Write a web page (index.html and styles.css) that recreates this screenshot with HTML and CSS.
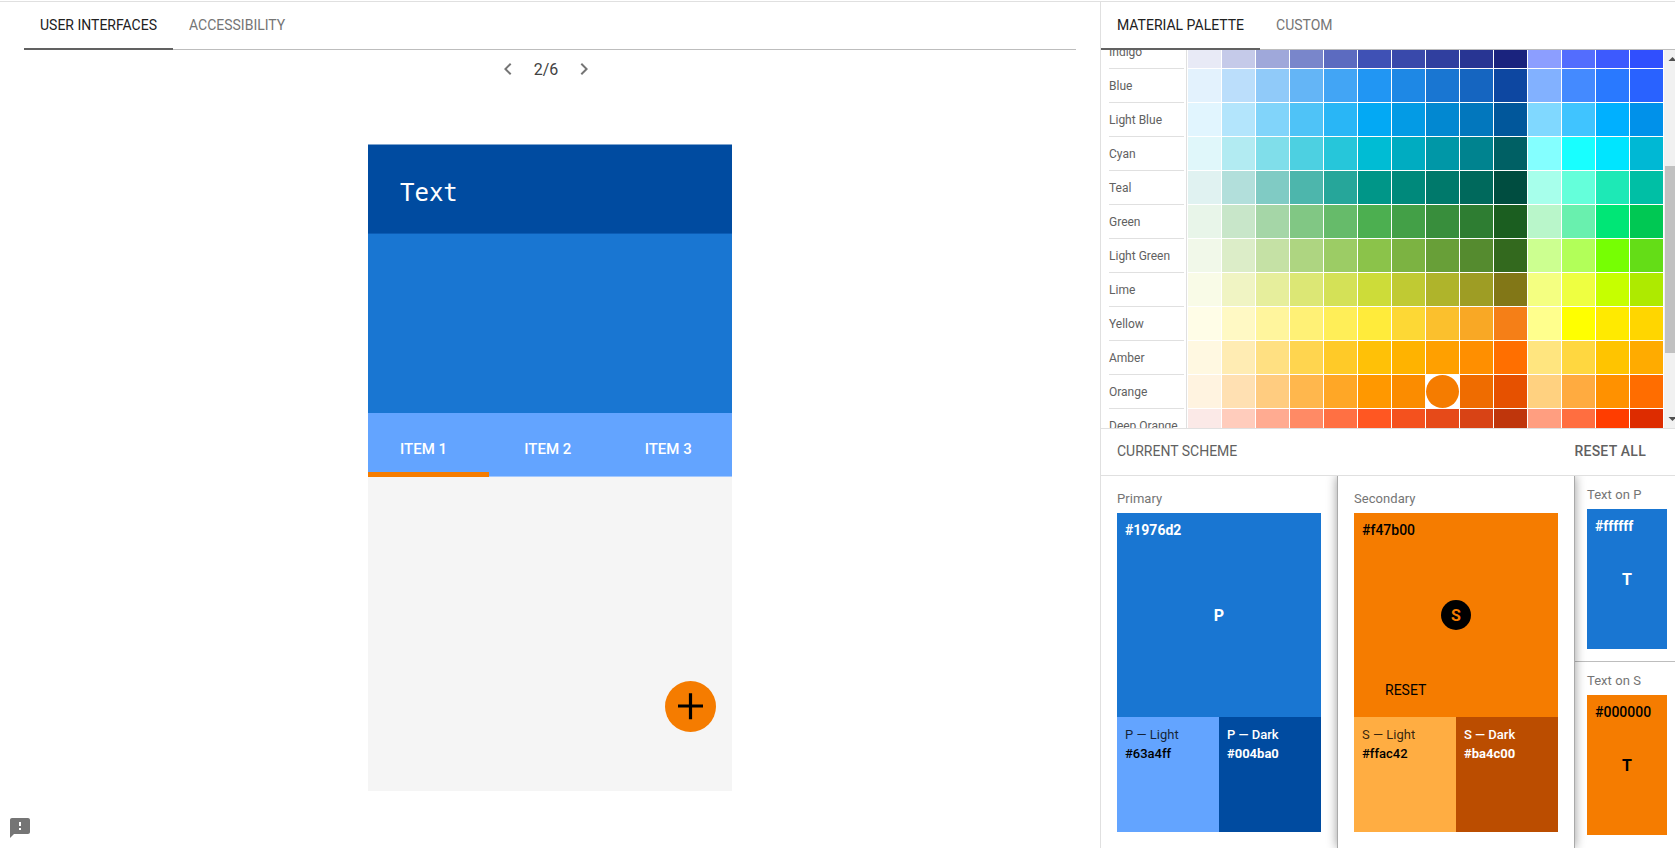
FILE: index.html
```html
<!DOCTYPE html>
<html lang="en">
<head>
<meta charset="utf-8">
<title>Color Tool</title>
<link rel="stylesheet" href="styles.css">
</head>
<body>
<div class="app">
  <main class="preview">
    <nav class="tabs tabs-left">
      <a class="tab active">USER INTERFACES</a>
      <a class="tab">ACCESSIBILITY</a>
    </nav>
    <div class="pager">
      <svg class="arrow" width="24" height="24" viewBox="0 0 24 24"><path d="M15.41 7.41L14 6l-6 6 6 6 1.41-1.41L10.83 12z"/></svg>
      <span class="count">2/6</span>
      <svg class="arrow" width="24" height="24" viewBox="0 0 24 24"><path d="M10 6L8.59 7.41 13.17 12l-4.58 4.59L10 18l6-6z"/></svg>
    </div>
    <div class="phone">
      <div class="phone-head">Text</div>
      <div class="phone-hero"></div>
      <div class="phone-tabs"><span class="item on">ITEM 1</span><span class="item">ITEM 2</span><span class="item">ITEM 3</span></div>
      <div class="phone-body">
        <svg class="fab" width="51" height="51" viewBox="0 0 51 51"><circle cx="25.5" cy="25.5" r="25.5" fill="#f57c00"/><path d="M13 25h25M25.5 12.200v26" stroke="#000" stroke-width="3.200"/></svg>
      </div>
    </div>
    <svg class="feedback" width="24" height="24" viewBox="0 0 24 24"><path d="M20 2H4c-1.100 0-1.990.9-1.990 2L2 22l4-4h14c1.100 0 2-.9 2-2V4c0-1.100-.9-2-2-2zm-7 12h-2v-2h2v2zm0-4h-2V6h2v4z"/></svg>
  </main>
  <aside class="side">
    <nav class="tabs">
      <a class="tab active">MATERIAL PALETTE</a>
      <a class="tab">CUSTOM</a>
    </nav>
    <div class="palette">
      <div class="rows" id="rows"></div>
      <div class="scrollbar">
        <svg class="sb-arrow" width="17" height="17" viewBox="0 0 17 17"><path d="M4.500 11L8.500 7l4 4z"/></svg>
        <div class="thumb"></div>
        <svg class="sb-arrow" width="17" height="17" viewBox="0 0 17 17"><path d="M4.500 6L8.500 10l4-4z"/></svg>
      </div>
    </div>
    <div class="scheme-head"><span>CURRENT SCHEME</span><span class="reset-all">RESET ALL</span></div>
    <div class="scheme">
      <section class="card">
        <h2 class="label">Primary</h2>
        <div class="main blue"><span class="hex bold">#1976d2</span><span class="letter">P</span></div>
        <div class="shades">
          <div class="shade blue-light"><span class="name">P — Light</span><span class="code">#63a4ff</span></div>
          <div class="shade blue-dark"><span class="name">P — Dark</span><span class="code">#004ba0</span></div>
        </div>
      </section>
      <section class="card selected">
        <h2 class="label">Secondary</h2>
        <div class="main orange"><span class="hex">#f47b00</span><span class="letter disc">S</span><span class="reset">RESET</span></div>
        <div class="shades">
          <div class="shade orange-light"><span class="name">S — Light</span><span class="code">#ffac42</span></div>
          <div class="shade orange-dark"><span class="name">S — Dark</span><span class="code">#ba4c00</span></div>
        </div>
      </section>
      <div class="texts">
        <section class="text-card"><h2 class="label">Text on P</h2><div class="main small blue"><span class="hex bold">#ffffff</span><span class="letter">T</span></div></section>
        <section class="text-card"><h2 class="label">Text on S</h2><div class="main small orange"><span class="hex">#000000</span><span class="letter">T</span></div></section>
      </div>
    </div>
  </aside>
</div>
<script src="palette.js"></script>
</body>
</html>
```
FILE: styles.css
```css
* { box-sizing: border-box; }
body { margin: 0; background: #fff; font-family: Roboto, "Liberation Sans", sans-serif; color: #616161; overflow: hidden; }
.app { display: flex; width: 1675px; height: 848px; padding-top: 1px; overflow: hidden; }
.preview, .side { border-top: 1px solid #e0e0e0; height: 847px; }
.preview { width: 1100px; flex: none; display: flex; flex-direction: column; position: relative; }
.side { width: 575px; flex: none; border-left: 1px solid #e0e0e0; overflow: hidden; }

.tabs { display: flex; height: 48px; border-bottom: 1px solid #bdbdbd; }
.tabs-left { margin: 0 24px; }
.tab { height: 48px; padding: 0 16px; font-size: 14px; line-height: 47px; color: #757575; white-space: nowrap; }
.tab.active { color: #212121; border-bottom: 2px solid #616161; }

.pager { display: flex; justify-content: center; align-items: center; height: 38px; gap: 13px; padding-right: 8px; color: #424242; font-size: 16px; }
.pager .count { width: 26px; text-align: center; }
.arrow { fill: #757575; }

.phone { width: 364px; height: 647px; margin: 56px 0 0 368px; display: flex; flex-direction: column; }
.phone-head { height: 90px; background: #004ba0; border-top: 1px solid #7fa5cf; border-bottom: 1px solid #0b5cb5; color: #fff; font: 24px/97px "DejaVu Sans Mono", monospace; padding-left: 32px; }
.phone-hero { height: 179px; background: #1976d2; }
.phone-tabs { height: 64px; background: #63a4ff; border-bottom: 1px solid #a2c8ff; display: flex; color: #fff; font-size: 15px; font-weight: 500; line-height: 73px; }
.item { width: 121px; padding-left: 32px; }
.item.on { width: 122px; margin-right: 2px; height: 64px; border-bottom: 5px solid #f57c00; }
.item:nth-child(2) { padding-left: 33px; }
.item:nth-child(3) { padding-left: 33px; }
.phone-body { flex: 1; background: #f5f5f5; display: flex; justify-content: flex-end; align-items: flex-end; padding: 0 16px 59px 0; }
.fab { display: block; }
.feedback { position: absolute; left: 8px; bottom: 8px; fill: #757575; }

.palette { display: flex; height: 378px; overflow: hidden; }
.rows { width: 563px; flex: none; margin-top: -15px; }
.row { display: flex; height: 34px; }
.row-name { width: 75px; margin-left: 8px; border-bottom: 1px solid #e0e0e0; font-size: 12px; line-height: 34px; color: #616161; white-space: nowrap; }
.cells { display: grid; grid-template-columns: repeat(14, 33px); gap: 1px; margin-left: 2px; border-left: 1px solid #e0e0e0; padding: 0 0 1px 1px; }
.cell.picked { border-radius: 50%; }
.scrollbar { width: 17px; flex: none; background: #f1f1f1; display: flex; flex-direction: column; align-items: center; }
.sb-arrow { fill: #505050; flex: none; display: block; }
.thumb { width: 15px; height: 187px; margin: 99px 0 58px; background: #c1c1c1; }

.scheme-head { display: flex; justify-content: space-between; height: 48px; border: 1px solid #e0e0e0; border-width: 1px 0; padding: 0 29px 0 16px; font-size: 14px; line-height: 45px; }
.reset-all { font-weight: 500; letter-spacing: .25px; }
.scheme { display: flex; height: 372px; }
.card { width: 236px; flex: none; padding: 16px 16px 0; }
.selected { width: 238px; border: 1px solid #aaa; border-width: 0 1px; box-shadow: 0 0 10px rgba(0,0,0,.4); clip-path: inset(0 -14px); }
.label { margin: 0 0 8px; font-size: 13px; font-weight: 400; line-height: 13px; height: 13px; letter-spacing: .05px; color: #757575; white-space: nowrap; }
.main { height: 204px; padding: 8px; display: grid; grid-template-rows: 18px 1fr 18px; color: #000; }
.hex { font-size: 14px; line-height: 18px; font-weight: 500; }
.bold { font-weight: 700; }
.letter { font-size: 16px; font-weight: 700; line-height: 32px; width: 30px; height: 30px; text-align: center; place-self: center; }
.disc { border-radius: 50%; background: #000; color: #f57c00; line-height: 31px; }
.reset { font-size: 14px; line-height: 18px; padding-left: 23px; position: relative; top: -10px; }
.blue { background: #1976d2; color: #fff; }
.orange { background: #f57c00; }
.shades { display: flex; height: 115px; }
.shade { width: 102px; padding: 8px; display: flex; flex-direction: column; font-size: 13px; line-height: 19px; color: #000; }
.code { font-weight: 500; }
.blue-light { background: #63a4ff; }
.orange-light { background: #ffad42; }
.blue-light .name, .orange-light .name { color: rgba(0,0,0,.8); }
.blue-dark { background: #004ba0; }
.orange-dark { background: #bb4d00; }
.blue-dark, .orange-dark { color: #fff; }
.blue-dark .name, .orange-dark .name { font-weight: 500; }
.blue-dark .code, .orange-dark .code { font-weight: 700; }
.texts { width: 101px; flex: none; }
.text-card { height: 186px; padding: 12px 0 0 12px; border-bottom: 1px solid #bdbdbd; }
.text-card:last-child { border-bottom: 0; }
.small { width: 80px; height: 140px; }
```
FILE: palette.js
```js
const PALETTE = [
  ["Indigo", "e8eaf6 c5cae9 9fa8da 7986cb 5c6bc0 3f51b5 3949ab 303f9f 283593 1a237e 8c9eff 536dfe 3d5afe 304ffe"],
  ["Blue", "e3f2fd bbdefb 90caf9 64b5f6 42a5f5 2196f3 1e88e5 1976d2 1565c0 0d47a1 82b1ff 448aff 2979ff 2962ff"],
  ["Light Blue", "e1f5fe b3e5fc 81d4fa 4fc3f7 29b6f6 03a9f4 039be5 0288d1 0277bd 01579b 80d8ff 40c4ff 00b0ff 0091ea"],
  ["Cyan", "e0f7fa b2ebf2 80deea 4dd0e1 26c6da 00bcd4 00acc1 0097a7 00838f 006064 84ffff 18ffff 00e5ff 00b8d4"],
  ["Teal", "e0f2f1 b2dfdb 80cbc4 4db6ac 26a69a 009688 00897b 00796b 00695c 004d40 a7ffeb 64ffda 1de9b6 00bfa5"],
  ["Green", "e8f5e9 c8e6c9 a5d6a7 81c784 66bb6a 4caf50 43a047 388e3c 2e7d32 1b5e20 b9f6ca 69f0ae 00e676 00c853"],
  ["Light Green", "f1f8e9 dcedc8 c5e1a5 aed581 9ccc65 8bc34a 7cb342 689f38 558b2f 33691e ccff90 b2ff59 76ff03 64dd17"],
  ["Lime", "f9fbe7 f0f4c3 e6ee9c dce775 d4e157 cddc39 c0ca33 afb42b 9e9d24 827717 f4ff81 eeff41 c6ff00 aeea00"],
  ["Yellow", "fffde7 fff9c4 fff59d fff176 ffee58 ffeb3b fdd835 fbc02d f9a825 f57f17 ffff8d ffff00 ffea00 ffd600"],
  ["Amber", "fff8e1 ffecb3 ffe082 ffd54f ffca28 ffc107 ffb300 ffa000 ff8f00 ff6f00 ffe57f ffd740 ffc400 ffab00"],
  ["Orange", "fff3e0 ffe0b2 ffcc80 ffb74d ffa726 ff9800 fb8c00 f57c00 ef6c00 e65100 ffd180 ffab40 ff9100 ff6d00"],
  ["Deep Orange", "fbe9e7 ffccbc ffab91 ff8a65 ff7043 ff5722 f4511e e64a19 d84315 bf360c ff9e80 ff6e40 ff3d00 dd2c00"]
];
const SELECTED = "f57c00";

document.getElementById("rows").innerHTML = PALETTE.map(([name, colors]) =>
  `<div class="row"><div class="row-name">${name}</div><div class="cells">` +
  colors.split(" ").map(c => `<div class="cell${c === SELECTED ? " picked" : ""}" style="background:#${c}"></div>`).join("") +
  `</div></div>`).join("");
```
